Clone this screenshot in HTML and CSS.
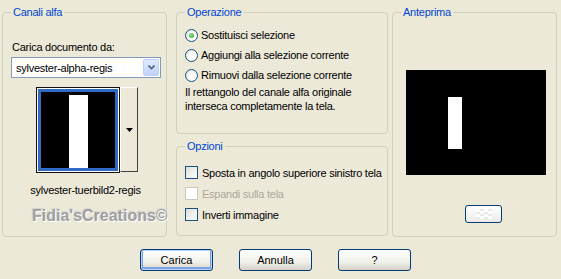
FILE: index.html
```html
<!DOCTYPE html>
<html lang="it">
<head>
<meta charset="UTF-8">
<title>Carica da canale alfa</title>
<link rel="stylesheet" href="styles.css">
</head>
<body>
<div class="dialog">
  <div class="panels">
    <!-- canali alfa -->
    <fieldset class="group group-channels">
      <legend>Canali alfa</legend>
      <div class="field-label">Carica documento da:</div>
      <div class="select">
        <span class="select-text">sylvester-alpha-regis</span>
        <span class="select-btn">
          <svg width="7" height="5" viewBox="0 0 7 5"><path d="M0.5 0.5 L3.5 3.5 L6.5 0.5" fill="none" stroke="#4d6185" stroke-width="1.6"/></svg>
        </span>
      </div>
      <div class="thumb-picker">
        <div class="thumb">
          <div class="thumb-img"><span class="thumb-bar"></span></div>
        </div>
        <div class="thumb-drop">
          <svg width="7" height="4" viewBox="0 0 7 4"><path d="M0 0 H7 L3.5 4 Z" fill="#000"/></svg>
        </div>
      </div>
      <div class="thumb-name">sylvester-tuerbild2-regis</div>
      <div class="watermark">Fidia'sCreations©</div>
    </fieldset>

    <div class="middle">
      <fieldset class="group group-op">
        <legend>Operazione</legend>
        <div class="opt-row"><span class="radio checked"></span>Sostituisci selezione</div>
        <div class="opt-row"><span class="radio"></span>Aggiungi alla selezione corrente</div>
        <div class="opt-row"><span class="radio"></span>Rimuovi dalla selezione corrente</div>
        <p class="note">Il rettangolo del canale alfa originale interseca completamente la tela.</p>
      </fieldset>
      <fieldset class="group group-opts">
        <legend>Opzioni</legend>
        <div class="chk-row"><span class="check"></span>Sposta in angolo superiore sinistro tela</div>
        <div class="chk-row disabled"><span class="check"></span>Espandi sulla tela</div>
        <div class="chk-row"><span class="check"></span>Inverti immagine</div>
      </fieldset>
    </div>

    <fieldset class="group group-preview">
      <legend>Anteprima</legend>
      <div class="preview"><span class="preview-bar"></span></div>
      <div class="bg-btn"><span class="checker"></span></div>
    </fieldset>
  </div>

  <div class="buttons">
    <button class="btn default">Carica</button>
    <button class="btn">Annulla</button>
    <button class="btn">?</button>
  </div>
</div>
</body>
</html>
```

FILE: styles.css
```css
body {
  margin: 0;
  padding: 6px 0 0 2px;
  background-color: #ece9d8;
  font-family: 'Liberation Sans', Arial, sans-serif;
  font-size: 11px;
  letter-spacing: -0.25px;
  color: #000;
}
.panels {
  display: flex;
  align-items: flex-start;
}
.group {
  position: relative;
  box-sizing: border-box;
  margin: 0;
  padding: 0 8px;
  min-width: 0;
  border: 1px solid #d0d0bf;
  border-radius: 4px;
}
.group legend {
  padding: 0 2px;
  color: #0046d5;
  line-height: 13px;
}

/* canali alfa */
.group-channels {
  width: 165px;
  height: 231px;
}
.field-label {
  margin-top: 21px;
  padding-left: 1px;
  line-height: 14px;
}
.select {
  display: flex;
  align-items: center;
  justify-content: space-between;
  box-sizing: border-box;
  width: 150px;
  height: 21px;
  margin-top: 3px;
  padding: 0 1px 0 4px;
  background: #fff;
  border: 1px solid #7f9db9;
}
.select-btn {
  display: flex;
  align-items: center;
  justify-content: center;
  box-sizing: border-box;
  width: 16px;
  height: 17px;
  border: 1px solid #bad0fc;
  border-radius: 2px;
  background: linear-gradient(#e0eafd, #bfd2f8);
}
.thumb-picker {
  display: flex;
  margin: 9px 0 0 25px;
}
.thumb {
  box-sizing: border-box;
  width: 84px;
  height: 86px;
  border: 1px solid #111;
  padding: 1px;
  background: #fff;
}
.thumb-img {
  position: relative;
  box-sizing: border-box;
  height: 100%;
  border: 3px solid #316ac5;
  background: #000;
}
.thumb-bar {
  position: absolute;
  left: 28px;
  top: 3px;
  bottom: 0;
  width: 19px;
  background: #fff;
}
.thumb-drop {
  display: flex;
  align-items: center;
  justify-content: center;
  box-sizing: border-box;
  width: 18px;
  height: 85px;
  border: 1px solid #fff;
  border-right-color: #404040;
  border-bottom-color: #404040;
  background: #ece9d8;
}
.thumb-name {
  margin-top: 10px;
  text-align: center;
  line-height: 14px;
  padding-left: 2px;
}
.watermark {
  position: absolute;
  left: 29px;
  top: 188px;
  font-size: 16px;
  font-weight: bold;
  letter-spacing: 0;
  color: #a0a0a0;
  text-shadow: 1px 1px 0 #fff, -1px -1px 1px #cfcfcf;
  white-space: nowrap;
}

/* colonna centrale */
.middle {
  display: flex;
  flex-direction: column;
  gap: 6px;
  width: 212px;
  margin-left: 9px;
}
.group-op {
  height: 128px;
  padding-top: 6px;
}
.group-opts {
  height: 96px;
  padding-top: 9px;
}
.opt-row, .chk-row {
  display: flex;
  align-items: center;
  gap: 3px;
  height: 20px;
  white-space: nowrap;
}
.chk-row {
  height: 21px;
  gap: 4px;
}
.radio {
  flex-shrink: 0;
  box-sizing: border-box;
  width: 13px;
  height: 13px;
  border: 1px solid #1c5180;
  border-radius: 50%;
  background: radial-gradient(circle at 60% 60%, #fff 30%, #dcdcd2);
  display: flex;
  align-items: center;
  justify-content: center;
}
.radio.checked::after {
  content: "";
  width: 5px;
  height: 5px;
  border-radius: 50%;
  background: radial-gradient(circle at 40% 40%, #8fe08f, #21a121);
}
.check {
  flex-shrink: 0;
  box-sizing: border-box;
  width: 13px;
  height: 13px;
  border: 1px solid #1c5180;
  background: linear-gradient(135deg, #dcdcd7, #fff);
}
.chk-row.disabled {
  color: #aca899;
}
.chk-row.disabled .check {
  border-color: #cac8bb;
  background: #fff;
}
.note {
  margin: 0;
  line-height: 14px;
}

/* anteprima */
.group-preview {
  width: 165px;
  height: 231px;
  margin-left: 4px;
}
.preview {
  position: relative;
  width: 140px;
  height: 105px;
  margin: 51px 0 0 5px;
  background: #000;
}
.preview-bar {
  position: absolute;
  left: 42px;
  top: 27px;
  width: 14px;
  height: 52px;
  background: #fff;
}
.bg-btn {
  box-sizing: border-box;
  width: 37px;
  height: 18px;
  margin: 30px 0 0 64px;
  border: 1px solid #003c74;
  border-radius: 3px;
  background: linear-gradient(#fff, #ecebe6);
  display: flex;
  align-items: center;
  justify-content: center;
}
.checker {
  width: 16px;
  height: 10px;
  background: repeating-conic-gradient(#e8e8e8 0 25%, #fff 0 50%) 0 0 / 8px 5px;
}

/* pulsanti */
.buttons {
  display: flex;
  gap: 26px;
  margin-top: 12px;
  padding-left: 138px;
}
.btn {
  box-sizing: border-box;
  width: 73px;
  height: 22px;
  padding: 0;
  font-family: inherit;
  font-size: 11px;
  color: #000;
  border: 1px solid #003c74;
  border-radius: 3px;
  background: linear-gradient(#fff, #f0f0ea 60%, #d6d0c5);
}
.btn.default {
  box-shadow: inset 0 0 0 1px #b9d1fa, inset 0 -1px 0 2px #7ba2e7;
}
```
